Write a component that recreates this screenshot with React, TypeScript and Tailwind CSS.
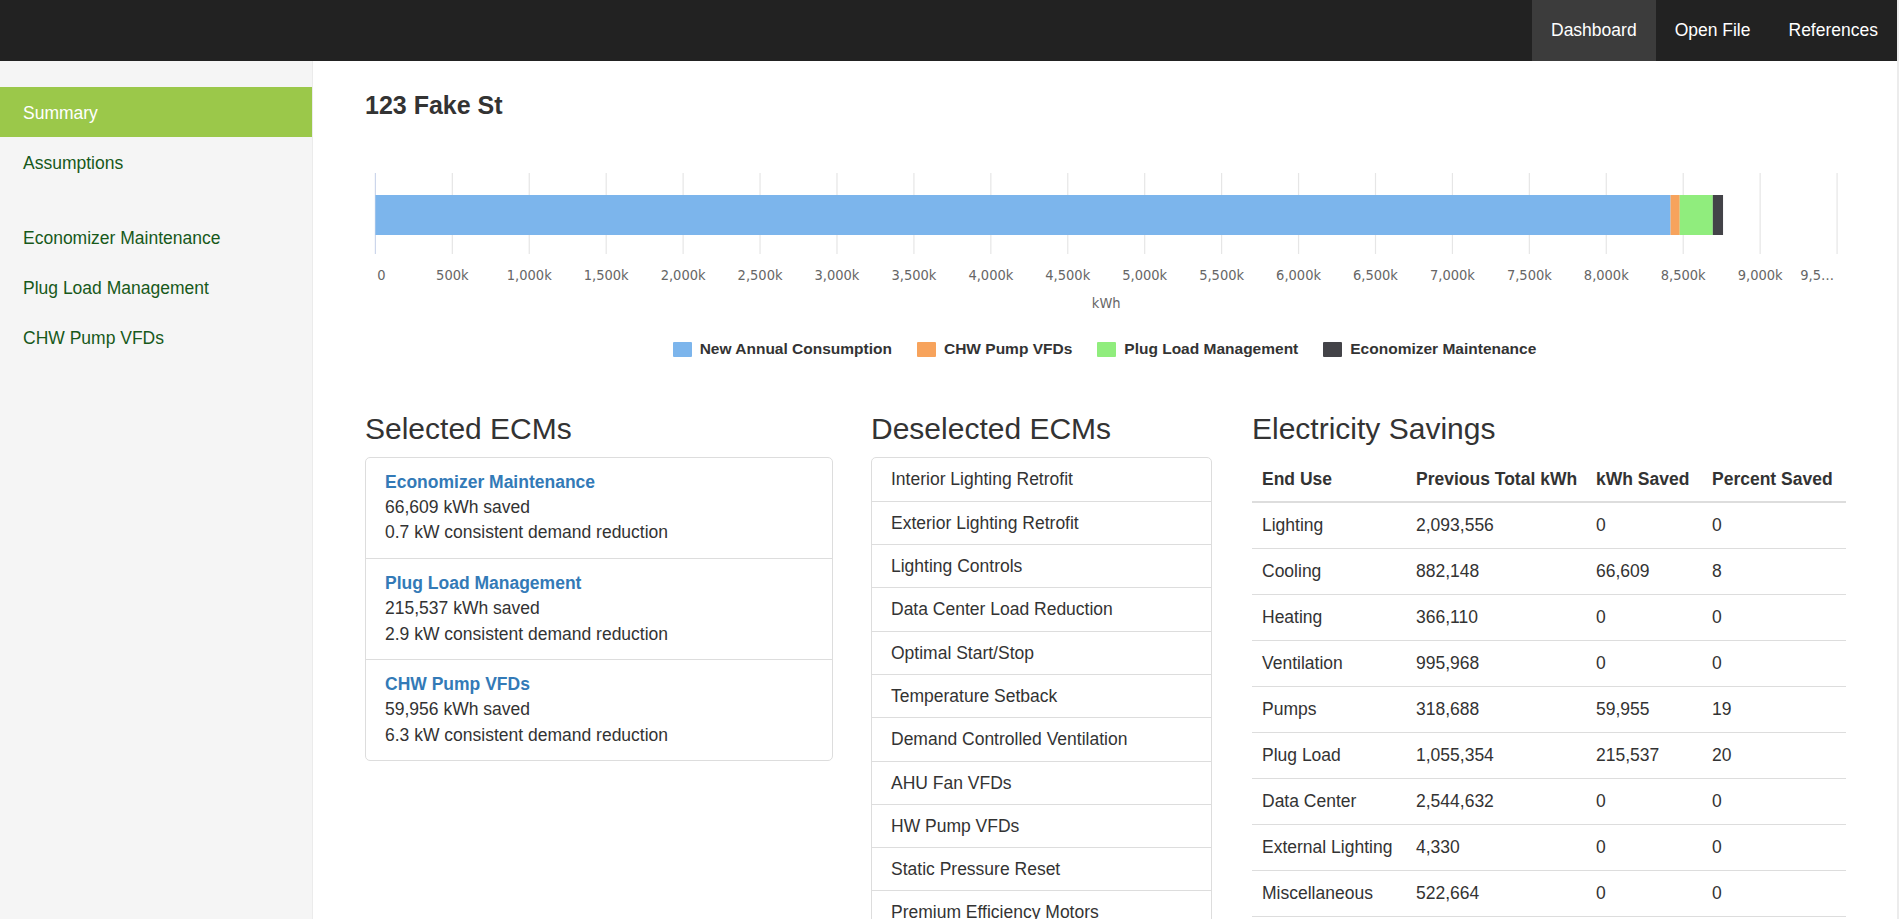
import React from "react";

const navItems = [
  { label: "Dashboard", active: true },
  { label: "Open File", active: false },
  { label: "References", active: false },
];

const selected = [
  { name: "Economizer Maintenance", kwh: "66,609", kw: "0.7" },
  { name: "Plug Load Management", kwh: "215,537", kw: "2.9" },
  { name: "CHW Pump VFDs", kwh: "59,956", kw: "6.3" },
];

const deselected = [
  "Interior Lighting Retrofit",
  "Exterior Lighting Retrofit",
  "Lighting Controls",
  "Data Center Load Reduction",
  "Optimal Start/Stop",
  "Temperature Setback",
  "Demand Controlled Ventilation",
  "AHU Fan VFDs",
  "HW Pump VFDs",
  "Static Pressure Reset",
  "Premium Efficiency Motors",
];

const savings = [
  ["Lighting", "2,093,556", "0", "0"],
  ["Cooling", "882,148", "66,609", "8"],
  ["Heating", "366,110", "0", "0"],
  ["Ventilation", "995,968", "0", "0"],
  ["Pumps", "318,688", "59,955", "19"],
  ["Plug Load", "1,055,354", "215,537", "20"],
  ["Data Center", "2,544,632", "0", "0"],
  ["External Lighting", "4,330", "0", "0"],
  ["Miscellaneous", "522,664", "0", "0"],
];

// chart geometry (px inside the 1480 wide svg)
const X0 = 10.4;
const STEP = 76.93;
const PER_KWH = (STEP / 500000) * 0.9972;
const TICK_FONT = "'DejaVu Sans Condensed','Liberation Sans Narrow','Liberation Sans',Arial,sans-serif";

const segments = [
  { value: 8441348, color: "#7cb5ec" },
  { value: 59956, color: "#f7a35c" },
  { value: 215537, color: "#90ed7d" },
  { value: 66609, color: "#434348" },
];

const legend = [
  { label: "New Annual Consumption", color: "#7cb5ec" },
  { label: "CHW Pump VFDs", color: "#f7a35c" },
  { label: "Plug Load Management", color: "#90ed7d" },
  { label: "Economizer Maintenance", color: "#434348" },
];

function tickLabel(i: number) {
  if (i === 0) return "0";
  const v = i * 500;
  return v >= 1000 ? `${Math.floor(v / 1000)},${String(v % 1000).padStart(3, "0")}k` : `${v}k`;
}

function UsageChart() {
  let x = X0;
  const bars = segments.map((s) => {
    const w = s.value * PER_KWH;
    const r = { x, w, color: s.color };
    x += w;
    return r;
  });

  return (
    <div>
      <svg width={1480} height={200} className="block">
        {Array.from({ length: 20 }).map((_, i) => (
          <line
            key={i}
            x1={X0 + i * STEP}
            x2={X0 + i * STEP}
            y1={51}
            y2={132}
            stroke={i === 0 ? "#ccd6eb" : "#e6e6e6"}
            strokeWidth={1.2}
          />
        ))}
        {bars.map((b, i) => (
          <rect key={i} x={b.x} y={73} width={b.w} height={40} fill={b.color} />
        ))}
        {Array.from({ length: 19 }).map((_, i) => (
          <text
            key={i}
            x={i === 0 ? X0 + 6 : X0 + i * STEP}
            y={158}
            textAnchor="middle"
            fill="#666666"
            fontSize={14.5}
            fontFamily={TICK_FONT}
          >
            {tickLabel(i)}
          </text>
        ))}
        <text x={X0 + 19 * STEP - 3} y={158} textAnchor="end" fill="#666666" fontSize={14.5} fontFamily={TICK_FONT}>
          9,5…
        </text>
        <text x={X0 + (19 * STEP) / 2} y={186} textAnchor="middle" fill="#666666" fontSize={14.5} fontFamily={TICK_FONT}>
          kWh
        </text>
      </svg>

      {/* legend */}
      <div className="mt-[18px] flex h-[18px] items-center justify-center gap-[25px] pr-[2px]">
        {legend.map((l) => (
          <div key={l.label} className="flex items-center gap-[8px]">
            <span className="inline-block h-[15px] w-[19px] rounded-[1px]" style={{ backgroundColor: l.color }} />
            <span className="text-[15.5px] font-bold leading-[18px] text-[#333]">{l.label}</span>
          </div>
        ))}
      </div>
    </div>
  );
}

export default function App() {
  return (
    <div className="flex h-screen overflow-hidden bg-white font-['Liberation_Sans',Arial,sans-serif] text-[#333]">
      <div className="flex min-w-0 flex-1 flex-col">
        {/* top nav */}
        <nav className="flex h-[61px] shrink-0 justify-end bg-[#222222]">
          {navItems.map((n) => (
            <a
              key={n.label}
              className={`${n.active ? "bg-[#3c3c3c]" : ""} flex items-center px-[19px] text-[17.5px] text-white`}
            >
              {n.label}
            </a>
          ))}
        </nav>

        <div className="flex min-h-0 flex-1">
          {/* sidebar */}
          <aside className="w-[313px] shrink-0 border-r border-[#ebebeb] bg-[#f5f5f5] pt-[26px] text-[17.5px]">
            <div className="flex h-[50px] items-center bg-[#9bc84a] pl-[23px] pt-[2px] text-white">Summary</div>
            <div className="flex h-[50px] items-center pl-[23px] pt-[2px] text-[#17591a]">Assumptions</div>
            <div className="mt-[25px]">
              {selected.map((s) => (
                <div key={s.name} className="flex h-[50px] items-center pl-[23px] pt-[2px] text-[#17591a]">
                  {s.name}
                </div>
              ))}
            </div>
          </aside>

          {/* main */}
          <main className="min-w-0 flex-1 pl-[52px] pr-[51px] pt-[27px]">
            <h1 className="text-[25px] font-bold leading-[34px] text-[#333]">123 Fake St</h1>

            <UsageChart />

            <div className="mt-[55px] flex">
              {/* selected */}
              <section className="w-[468px] shrink-0">
                <h3 className="mb-[11.5px] text-[30px] leading-[32px]">Selected ECMs</h3>
                <div className="rounded-[5px] border border-[#dddddd]">
                  {selected.map((s, i) => (
                    <div
                      key={s.name}
                      className={`${i > 0 ? "border-t border-[#dddddd]" : ""} px-[19px] pb-[12px] pt-[12px] text-[17.5px] leading-[25.4px]`}
                    >
                      <div className="font-bold text-[#337ab7]">{s.name}</div>
                      <div>{s.kwh} kWh saved</div>
                      <div>{s.kw} kW consistent demand reduction</div>
                    </div>
                  ))}
                </div>
              </section>

              {/* deselected */}
              <section className="ml-[38px] w-[341px] shrink-0">
                <h3 className="mb-[11.5px] text-[30px] leading-[32px]">Deselected ECMs</h3>
                <div className="rounded-t-[5px] border border-[#dddddd]">
                  {deselected.map((d, i) => (
                    <div
                      key={d}
                      className={`${i > 0 ? "border-t border-[#dddddd]" : ""} flex h-[43.3px] items-center px-[19px] text-[17.5px]`}
                    >
                      {d}
                    </div>
                  ))}
                </div>
              </section>

              {/* electricity savings */}
              <section className="ml-[40px] w-[594px] shrink-0">
                <h3 className="mb-[11.5px] text-[30px] leading-[32px]">Electricity Savings</h3>
                <table className="w-full table-fixed border-collapse text-left text-[17.5px]">
                  <colgroup>
                    <col className="w-[154px]" />
                    <col className="w-[180px]" />
                    <col className="w-[116px]" />
                    <col className="w-[144px]" />
                  </colgroup>
                  <thead>
                    <tr className="border-b-2 border-[#dddddd]">
                      {["End Use", "Previous Total kWh", "kWh Saved", "Percent Saved"].map((h) => (
                        <th key={h} className="whitespace-nowrap px-[10px] py-[10px] font-bold leading-[24px]">
                          {h}
                        </th>
                      ))}
                    </tr>
                  </thead>
                  <tbody>
                    {savings.map((row) => (
                      <tr key={row[0]} className="border-b border-[#dddddd]">
                        {row.map((c, j) => (
                          <td key={j} className="whitespace-nowrap px-[10px] py-[10px] leading-[25px]">
                            {c}
                          </td>
                        ))}
                      </tr>
                    ))}
                  </tbody>
                </table>
              </section>
            </div>
          </main>
        </div>
      </div>
      <div className="w-[2px] shrink-0 bg-[#ececec]" />
    </div>
  );
}
